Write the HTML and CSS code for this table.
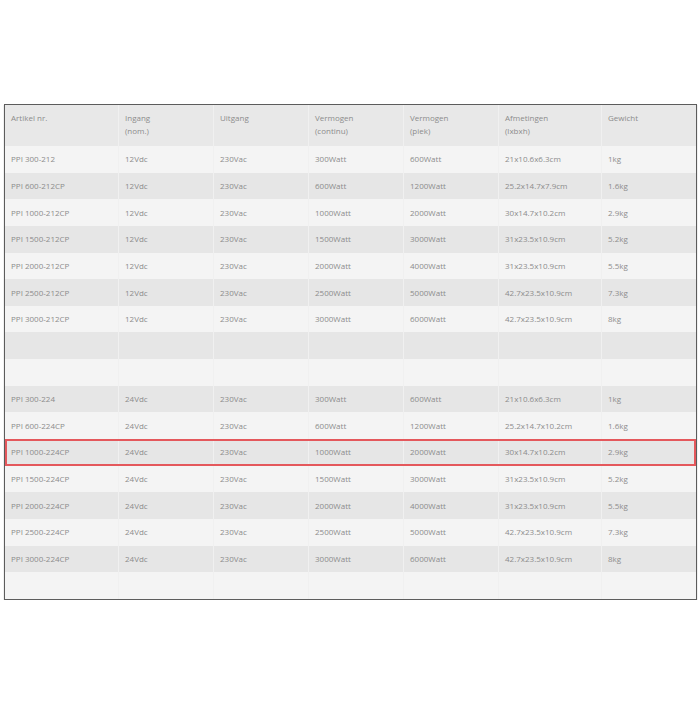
FILE: index.html
```html
<!DOCTYPE html>
<html>
<head>
<meta charset="utf-8">
<link rel="stylesheet" href="styles.css">
</head>
<body>
<div class="wrap">
<table class="specs">
<colgroup>
<col class="c1"><col class="c2"><col class="c3"><col class="c4"><col class="c5"><col class="c6"><col class="c7">
</colgroup>
<thead>
<tr><th>Artikel nr.</th><th>Ingang<br>(nom.)</th><th>Uitgang</th><th>Vermogen<br>(continu)</th><th>Vermogen<br>(piek)</th><th>Afmetingen<br>(lxbxh)</th><th>Gewicht</th></tr>
</thead>
<tbody>
<tr><td>PPI 300-212</td><td>12Vdc</td><td>230Vac</td><td>300Watt</td><td>600Watt</td><td>21x10.6x6.3cm</td><td>1kg</td></tr>
<tr><td>PPI 600-212CP</td><td>12Vdc</td><td>230Vac</td><td>600Watt</td><td>1200Watt</td><td>25.2x14.7x7.9cm</td><td>1.6kg</td></tr>
<tr><td>PPI 1000-212CP</td><td>12Vdc</td><td>230Vac</td><td>1000Watt</td><td>2000Watt</td><td>30x14.7x10.2cm</td><td>2.9kg</td></tr>
<tr><td>PPI 1500-212CP</td><td>12Vdc</td><td>230Vac</td><td>1500Watt</td><td>3000Watt</td><td>31x23.5x10.9cm</td><td>5.2kg</td></tr>
<tr><td>PPI 2000-212CP</td><td>12Vdc</td><td>230Vac</td><td>2000Watt</td><td>4000Watt</td><td>31x23.5x10.9cm</td><td>5.5kg</td></tr>
<tr><td>PPI 2500-212CP</td><td>12Vdc</td><td>230Vac</td><td>2500Watt</td><td>5000Watt</td><td>42.7x23.5x10.9cm</td><td>7.3kg</td></tr>
<tr><td>PPI 3000-212CP</td><td>12Vdc</td><td>230Vac</td><td>3000Watt</td><td>6000Watt</td><td>42.7x23.5x10.9cm</td><td>8kg</td></tr>
<tr><td></td><td></td><td></td><td></td><td></td><td></td><td></td></tr>
<tr><td></td><td></td><td></td><td></td><td></td><td></td><td></td></tr>
<tr><td>PPI 300-224</td><td>24Vdc</td><td>230Vac</td><td>300Watt</td><td>600Watt</td><td>21x10.6x6.3cm</td><td>1kg</td></tr>
<tr><td>PPI 600-224CP</td><td>24Vdc</td><td>230Vac</td><td>600Watt</td><td>1200Watt</td><td>25.2x14.7x10.2cm</td><td>1.6kg</td></tr>
<tr class="active"><td>PPI 1000-224CP</td><td>24Vdc</td><td>230Vac</td><td>1000Watt</td><td>2000Watt</td><td>30x14.7x10.2cm</td><td>2.9kg</td></tr>
<tr><td>PPI 1500-224CP</td><td>24Vdc</td><td>230Vac</td><td>1500Watt</td><td>3000Watt</td><td>31x23.5x10.9cm</td><td>5.2kg</td></tr>
<tr><td>PPI 2000-224CP</td><td>24Vdc</td><td>230Vac</td><td>2000Watt</td><td>4000Watt</td><td>31x23.5x10.9cm</td><td>5.5kg</td></tr>
<tr><td>PPI 2500-224CP</td><td>24Vdc</td><td>230Vac</td><td>2500Watt</td><td>5000Watt</td><td>42.7x23.5x10.9cm</td><td>7.3kg</td></tr>
<tr><td>PPI 3000-224CP</td><td>24Vdc</td><td>230Vac</td><td>3000Watt</td><td>6000Watt</td><td>42.7x23.5x10.9cm</td><td>8kg</td></tr>
<tr><td></td><td></td><td></td><td></td><td></td><td></td><td></td></tr>
</tbody>
</table>
</div>
</body>
</html>
```

FILE: styles.css
```css
html, body {
  margin: 0;
  padding: 0;
  background: #ffffff;
}
body {
  font-family: "Open Sans", "Liberation Sans", sans-serif;
}
.wrap {
  margin: 104px 0 0 4px;
  width: 691px;
  border: 1px solid #5c5c5c;
  box-shadow: 0 1px 1px rgba(0,0,0,0.35);
}
.specs {
  width: 691px;
  table-layout: fixed;
  border-collapse: separate;
  border-spacing: 0;
  font-size: 8px;
  color: #8c8c8c;
}
.c1 { width: 113px; }
.c2 { width: 95px; }
.c3 { width: 95px; }
.c4 { width: 95px; }
.c5 { width: 95px; }
.c6 { width: 103px; }
.c7 { width: 95px; }
.specs th {
  font-weight: normal;
  text-align: left;
  vertical-align: top;
  background: #e8e8e8;
  height: 41px;
  box-sizing: border-box;
  padding: 6px 6px 0 6px;
  line-height: 13px;
}
.specs td {
  height: 26.65px;
  box-sizing: border-box;
  padding: 0 6px;
  vertical-align: middle;
  line-height: 12px;
  white-space: nowrap;
}
.specs th + th,
.specs td + td {
  border-left: 1px solid #f0f0f0;
}
.specs tbody tr:nth-child(odd) td {
  background: #f4f4f4;
}
.specs tbody tr:nth-child(even) td {
  background: #e6e6e6;
}
.specs tr.active {
  outline: 2px solid #e4585c;
  outline-offset: -2px;
}
```
